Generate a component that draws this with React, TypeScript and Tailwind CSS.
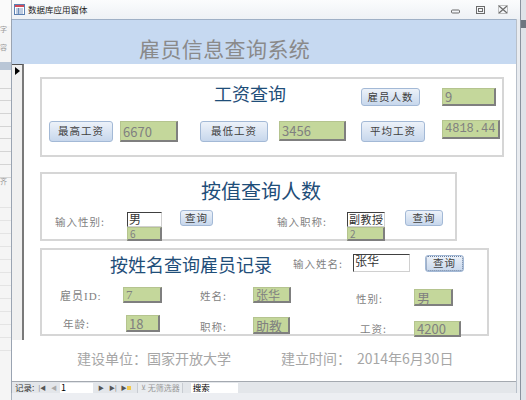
import React from "react"

const cjk = "font-['Noto_Sans_CJK_SC',sans-serif]"

function Btn({ label, className = "" }: { label: string; className?: string }) {
  return (
    <div
      className={`flex shrink-0 items-center justify-center rounded-[3px] border border-[#a3b9d6] bg-linear-to-b from-[#edf2f9] to-[#c7d7ec] text-[10.5px] leading-none tracking-[1px] text-[#404040] ${className}`}
    >
      {label}
    </div>
  )
}

function Val({ v, size = "text-[13px]", className = "" }: { v: string; size?: string; className?: string }) {
  return (
    <div
      className={`flex shrink-0 whitespace-nowrap border-t border-l border-t-[#b5c48f] border-l-[#b5c48f] border-r-2 border-b-2 border-[#7f7f7f] bg-[#c4d79b] pl-[2px] leading-none text-[#808080] ${size} ${className}`}
    >
      {v}
    </div>
  )
}

function Lbl({ t, className = "" }: { t: string; className?: string }) {
  return (
    <div className={`shrink-0 whitespace-nowrap leading-none tracking-[1px] text-[#7f7f7f] ${className}`}>
      {t}
    </div>
  )
}

function Input({ v, size = "text-[12px]", className = "" }: { v: string; size?: string; className?: string }) {
  return (
    <div
      className={`flex shrink-0 items-start whitespace-nowrap border-t border-l border-[#404040] border-r border-b border-r-[#d0d0d0] border-b-[#d0d0d0] bg-white pl-px leading-[12px] text-[#333] ${size} ${className}`}
    >
      {v}
    </div>
  )
}

function NavPaneEdge() {
  // sliver of the navigation pane behind the form window
  return (
    <div className="flex w-[11px] shrink-0 flex-col bg-[#f5f5f5]">
      <div className="h-[26px] bg-[#fafafa]" />
      <div className="h-[8px] text-[7px] leading-none text-[#999]">字</div>
      <div className="h-[10px]" />
      <div className="h-[8px] text-[7px] leading-none text-[#999]">容</div>
      <div className="mt-[10px] h-[8px] bg-[#b9c6d6]" />
      <div className="mt-[6px] h-[13px] border-b border-[#d4d4d4]" />
      <div className="h-[12px] border-b border-[#d4d4d4]" />
      <div className="h-[13px] border-b border-[#d4d4d4]" />
      <div className="h-[13px] border-b border-[#d4d4d4]" />
      <div className="h-[12px] border-b border-[#d4d4d4]" />
      <div className="h-[13px] border-b border-[#d4d4d4]" />
      <div className="h-[13px] border-b border-[#d4d4d4]" />
      <div className="h-[13px] border-b border-[#d4d4d4]" />
      <div className="h-[17px] text-[7px] leading-none text-[#999]">齐</div>
      <div className="h-[13px] border-b border-[#e4e4e4]" />
      <div className="h-[13px] border-b border-[#e4e4e4]" />
      <div className="h-[13px] border-b border-[#e4e4e4]" />
      <div className="h-[13px] border-b border-[#e4e4e4]" />
      <div className="h-[13px] border-b border-[#e4e4e4]" />
      <div className="h-[13px] border-b border-[#e4e4e4]" />
      <div className="h-[13px] border-b border-[#e4e4e4]" />
      <div className="h-[13px] border-b border-[#e4e4e4]" />
      <div className="h-[13px] border-b border-[#e4e4e4]" />
      <div className="h-[13px] border-b border-[#e4e4e4]" />
      <div className="h-[13px] border-b border-[#e4e4e4]" />
      <div className="h-[13px] border-b border-[#e4e4e4]" />
      <div className="flex-1" />
    </div>
  )
}

function TitleBar() {
  return (
    <div className="flex h-[19px] shrink-0 items-center border-l border-[#a9b3bf] bg-linear-to-b from-[#fbfcfd] to-[#eef1f5]">
      <svg width="11" height="11" viewBox="0 0 11 11" className="ml-[2px]">
        <rect x="0.5" y="0.5" width="10" height="10" fill="#fff" stroke="#5b7fb1" />
        <rect x="1" y="1" width="9" height="2" fill="#d04a5a" />
        <path d="M2 5h7M2 7h7M2 9h7M4.5 4v6" stroke="#5b7fb1" strokeWidth="0.8" />
      </svg>
      <span className="ml-[3px] text-[8.5px] leading-none text-[#222]">数据库应用窗体</span>
      <div className="flex-1" />
      <svg width="9" height="5" viewBox="0 0 9 5" className="mr-[16px] mt-[4px]">
        <rect x="0.5" y="1" width="8" height="3" rx="1" fill="none" stroke="#6b6b6b" />
      </svg>
      <svg width="9" height="8" viewBox="0 0 9 8" className="mr-[13px]">
        <rect x="0.5" y="0.5" width="8" height="7" fill="none" stroke="#6b6b6b" />
        <rect x="2.5" y="2.5" width="4" height="3" fill="none" stroke="#6b6b6b" />
      </svg>
      <svg width="10" height="9" viewBox="0 0 10 9" className="mr-[12px]">
        <path d="M1 1l8 7M9 1l-8 7" stroke="#6b6b6b" strokeWidth="1.2" />
        <rect x="0.5" y="0.5" width="9" height="8" fill="none" stroke="#9a9a9a" strokeWidth="0.6" />
      </svg>
    </div>
  )
}

function NavBar() {
  return (
    <div className="flex h-[12px] shrink-0 items-center border-t border-[#a4a9b0] bg-[#e3e6ea] text-[8.5px] leading-none text-[#333]">
      <span className="ml-[3px]">记录:</span>
      <span className="ml-[4px] text-[6px] text-[#555]">|◀</span>
      <span className="ml-[5px] text-[6px] text-[#aaa]">◀</span>
      <div className="ml-[3px] flex h-[10px] w-[33px] items-center bg-white pl-px text-[9px] text-black">1</div>
      <span className="ml-[5px] text-[6px] text-[#555]">▶</span>
      <span className="ml-[5px] text-[6px] text-[#555]">▶|</span>
      <span className="ml-[4px] text-[6px] text-[#555]">▶</span>
      <span className="h-[4px] w-[4px] bg-[#f2c94c]" />
      <div className="ml-[6px] flex h-[10px] w-[46px] items-center border-x border-[#c8ccd2] bg-[#e9ecef] pl-[3px] text-[#9a9a9a]">
        <span className="text-[7px]">⊻</span>
        <span className="ml-[2px] text-[8px]">无筛选器</span>
      </div>
      <div className="ml-[8px] flex h-[10px] w-[47px] items-center bg-white pl-[2px] text-[8.5px] text-black">搜索</div>
    </div>
  )
}

export default function App() {
  return (
    <div className={`flex h-[400px] w-[526px] overflow-hidden bg-[#e6e9ee] ${cjk}`}>
      <NavPaneEdge />

      <div className="flex w-[509px] shrink-0 flex-col">
        <TitleBar />

        <div className="flex flex-1">
          {/* form */}
          <div className="flex w-[505px] flex-col border-l border-[#9aa4b2] bg-white">
            {/* header */}
            <div className="h-[45px] shrink-0 border-t border-[#9fb0c6] bg-[#c6d9f1] pl-[127px] pt-[18px]">
              <div className="text-[21px] leading-none tracking-[0.4px] text-[#8a8a8a]">雇员信息查询系统</div>
            </div>

            {/* detail */}
            <div className="flex h-[276px] shrink-0">
              <div className="w-[12px] shrink-0 border-t border-r-2 border-t-[#555] border-r-[#7a7a7a] bg-[#f0f0f0] pl-[3px] pt-[2px]">
                <svg width="5" height="8" viewBox="0 0 5 8">
                  <path d="M0 0l5 4-5 4z" fill="#000" />
                </svg>
              </div>

              <div className="flex w-[492px] flex-col">
                {/* 工资查询 */}
                <div className="ml-[16px] mt-[13px] h-[80px] w-[464px] shrink-0 border-2 border-[#d6d6d6]">
                  <div className="flex h-[42px] items-start">
                    <div className="ml-[172px] mt-[5px] w-[147px] shrink-0 text-[18px] leading-none text-[#1f4e79]">工资查询</div>
                    <Btn label="雇员人数" className="mt-[9px] h-[18px] w-[59px]" />
                    <Val v="9" className="ml-[22px] mt-[9px] h-[18px] w-[54px] items-center" />
                  </div>
                  <div className="flex items-start">
                    <Btn label="最高工资" className="ml-[7px] h-[21px] w-[64px]" />
                    <Val v="6670" className="ml-[7px] h-[21px] w-[58px] items-center" />
                    <Btn label="最低工资" className="ml-[22px] h-[21px] w-[68px]" />
                    <Val v="3456" className="ml-[11px] h-[20px] w-[67px] items-center" />
                    <Btn label="平均工资" className="ml-[15px] h-[21px] w-[64px]" />
                    <Val
                      v="4818.44"
                      size="text-[12px]"
                      className="ml-[17px] -mt-px h-[19px] w-[58px] items-center font-['Liberation_Mono',monospace]"
                    />
                  </div>
                </div>

                {/* 按值查询人数 */}
                <div className="ml-[16px] mt-[15px] h-[69px] w-[417px] shrink-0 border-2 border-[#d6d6d6]">
                  <div className="flex h-[37px] items-start">
                    <div className="ml-[159px] mt-[7px] text-[20px] leading-none text-[#1f4e79]">按值查询人数</div>
                  </div>
                  <div className="flex items-start">
                    <Lbl t="输入性别:" className="ml-[13px] mt-[6px] w-[60px] text-[10.5px]" />
                    <div className="ml-[12px] mt-px flex w-[35px] shrink-0 flex-col">
                      <Input v="男" className="h-[15px]" />
                      <Val v="6" size="text-[10px]" className="h-[14px] items-center border-l-[#7f7f7f]" />
                    </div>
                    <Btn label="查询" className="ml-[18px] -mt-px h-[16px] w-[33px]" />
                    <Lbl t="输入职称:" className="ml-[64px] mt-[6px] w-[60px] text-[10.5px]" />
                    <div className="ml-[10px] mt-px flex w-[38px] shrink-0 flex-col">
                      <Input v="副教授" size="text-[11px]" className="h-[15px] tracking-[0.5px]" />
                      <Val v="2" size="text-[10px]" className="h-[14px] items-center border-l-[#7f7f7f]" />
                    </div>
                    <Btn label="查询" className="ml-[20px] -mt-px h-[16px] w-[38px]" />
                  </div>
                </div>

                {/* 按姓名查询雇员记录 */}
                <div className="ml-[16px] mt-[7px] h-[88px] w-[449px] shrink-0 border-2 border-[#d6d6d6]">
                  <div className="flex h-[36px] items-start">
                    <div className="ml-[68px] mt-[5px] w-[183px] shrink-0 text-[18px] leading-none text-[#1f4e79]">按姓名查询雇员记录</div>
                    <Lbl t="输入姓名:" className="mt-[9px] w-[60px] text-[10.5px]" />
                    <Input v="张华" className="mt-[4px] h-[18px] w-[57px]" />
                    <Btn
                      label="查询"
                      className="ml-[15px] mt-[5px] h-[17px] w-[39px] outline-1 outline-dotted -outline-offset-2 outline-[#6a7f9e]"
                    />
                  </div>
                  <div className="flex h-[27px] items-start">
                    <Lbl t="雇员ID:" className="ml-[18px] mt-[5px] w-[63px] font-['Liberation_Serif','Noto_Sans_CJK_SC',serif] text-[11px]" />
                    <Val v="7" className="mt-px h-[16px] w-[39px] items-center font-['Liberation_Serif',serif]" />
                    <Lbl t="姓名:" className="ml-[38px] mt-[5px] w-[53px] text-[10.5px]" />
                    <Val v="张华" size="text-[12px]" className="mt-px h-[16px] w-[38px] items-center" />
                    <Lbl t="性别:" className="ml-[65px] mt-[8px] w-[58px] text-[10.5px]" />
                    <Val v="男" className="mt-[3px] h-[17px] w-[39px] items-center" />
                  </div>
                  <div className="flex items-start">
                    <Lbl t="年龄:" className="ml-[21px] mt-[6px] w-[63px] text-[10.5px]" />
                    <Val v="18" className="mt-[2px] h-[17px] w-[34px] items-center" />
                    <Lbl t="职称:" className="ml-[40px] mt-[9px] w-[53px] text-[10.5px]" />
                    <Val v="助教" className="mt-[4px] h-[17px] w-[37px] items-center" />
                    <Lbl t="工资:" className="ml-[70px] mt-[11px] w-[54px] text-[10.5px]" />
                    <Val v="4200" className="mt-[8px] h-[16px] w-[47px] items-center" />
                  </div>
                </div>
              </div>
            </div>

            {/* footer */}
            <div className="flex h-[41px] shrink-0 items-start pl-[65px] pt-[11px] text-[14px] leading-none text-[#a6a6a6]">
              <span>建设单位：国家开放大学</span>
              <span className="ml-[50px]">建立时间：</span>
              <span className="ml-[6px]">2014年6月30日</span>
            </div>

            <NavBar />
          </div>

          {/* right window frame */}
          <div className="w-[4px] shrink-0 border-l border-[#b8c0ca] bg-[#e9ecf0]" />
        </div>

        <div className="h-[7px] shrink-0 border-l border-[#a9b3bf] bg-[#eceef2]" />
      </div>

      <div className="flex-1 border-l border-[#8a939e] bg-[#dfe3e8]">
        <div className="mt-[20px] h-[8px] bg-[#6d7680]" />
      </div>
    </div>
  )
}
